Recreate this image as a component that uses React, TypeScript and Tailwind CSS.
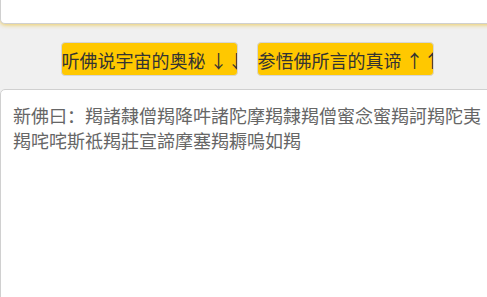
import React from "react";

export default function App() {
  const font = { fontFamily: '"Noto Sans CJK SC", "Noto Sans", sans-serif' };
  return (
    <div className="h-[297px] w-[487px] overflow-hidden bg-[#f0f0f0]" style={font}>
      <div className="w-[494px] flex flex-col">
        <div className="h-[24px] bg-white border border-t-0 border-[#d0d0d0] rounded-b-[5px] shadow-[0_1px_4px_rgba(235,200,80,0.9)]" />
        <div className="flex justify-center gap-[19px] pt-[18px]">
          <button className="w-[177px] h-[34px] bg-[#ffc800] border border-[#d6d6d6] rounded-[4px] overflow-hidden whitespace-nowrap text-left p-0 text-[18px] leading-[34px] text-[#333]">
            听佛说宇宙的奥秘 ↓↓
          </button>
          <button className="w-[177px] h-[34px] bg-[#ffc800] border border-[#d6d6d6] rounded-[4px] overflow-hidden whitespace-nowrap text-left p-0 text-[18px] leading-[34px] text-[#333]">
            参悟佛所言的真谛 ↑↑
          </button>
        </div>
        <div className="mt-[13px] h-[220px] bg-white border border-[#d0d0d0] rounded-[5px] pl-[12px] pr-[10px] pt-[13px] text-[18px] leading-[25px] text-[#666] break-all">
          新佛曰：羯諸隸僧羯降吽諸陀摩羯隸羯僧蜜念蜜羯訶羯陀夷羯咤咤斯祗羯莊宣諦摩塞羯耨嗚如羯
        </div>
      </div>
    </div>
  );
}
